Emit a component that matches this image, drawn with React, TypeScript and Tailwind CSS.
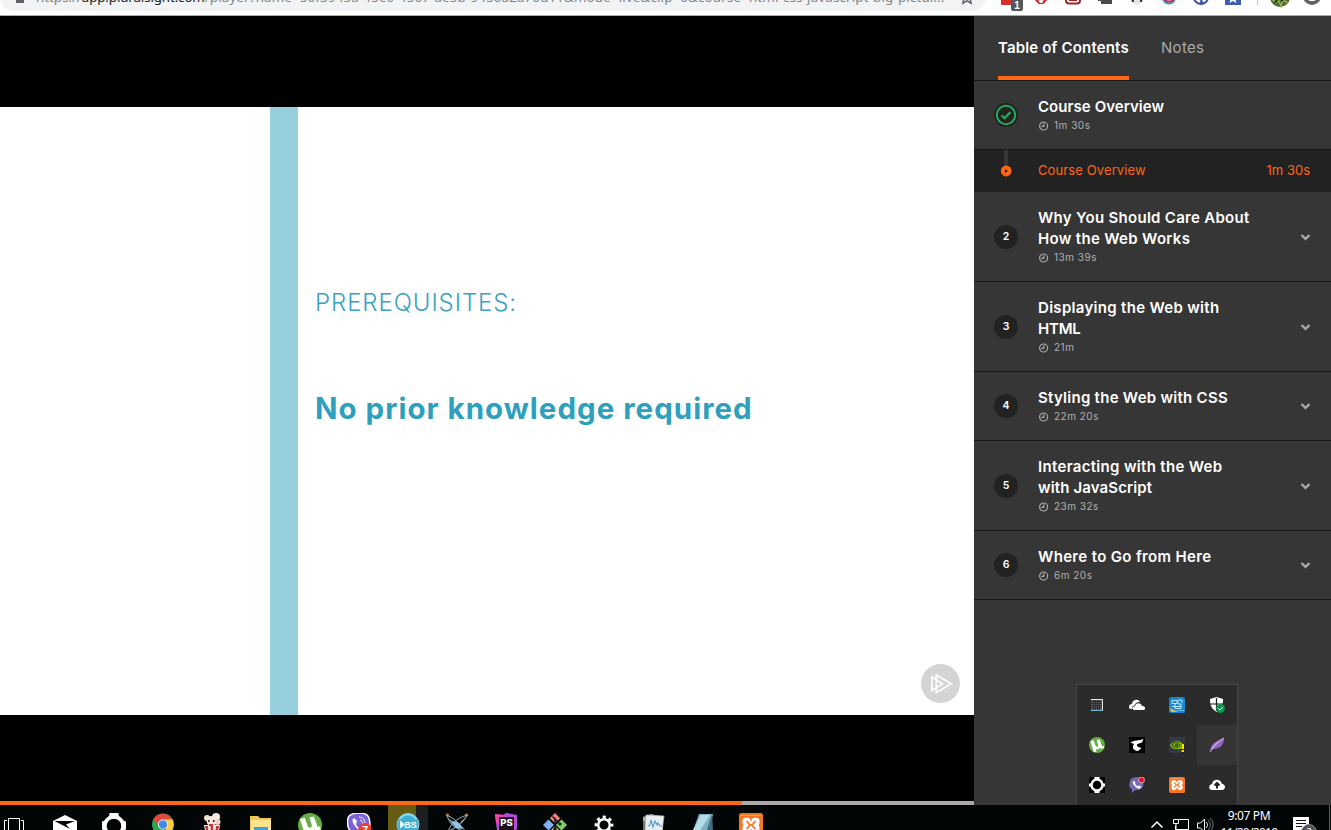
import type { ReactNode } from "react";

/* ---------- Browser toolbar ---------- */

function BrowserBar() {
  return (
    <header className="relative h-4 shrink-0 overflow-hidden border-b border-[#a9acaf] bg-white font-['Noto_Sans',sans-serif]">
      <div className="-mt-[17px] flex h-7 items-center">
        <div className="flex h-7 w-[986px] shrink-0 items-center rounded-full bg-[#f1f3f4] text-[13.300px] leading-7 text-[#80868b]">
          <svg viewBox="0 0 8 12" className="ml-4 h-3 w-2 shrink-0">
            <path d="M0 5h8v7H0z" fill="#5f6368" />
            <path d="M2 5V3a2 2 0 0 1 4 0v2" fill="none" stroke="#5f6368" strokeWidth="1.3" />
          </svg>
          <div className="ml-3 flex w-[910px] whitespace-nowrap">
            <span>https://</span>
            <span className="tracking-[-0.1px] text-[#202124]">app.pluralsight.com</span>
            <span className="tracking-[0.180px]">
              /player?name=56f3945a-45e0-4567-ae5b-9450a2a76d11&amp;mode=live&amp;clip=0&amp;course=html-css-javascript-big-pictur...
            </span>
          </div>
          <svg viewBox="0 0 16 16" className="ml-[13px] h-4 w-4 shrink-0" fill="none" stroke="#5f6368" strokeWidth="1.5">
            <path d="M8 1.7l2 4.3 4.6.5-3.5 3.1 1 4.6L8 11.8l-4.1 2.4 1-4.6L1.400 6.500 6 6z" />
          </svg>
        </div>
        <svg viewBox="986 -17 345 33" className="h-[33px] w-[345px] shrink-0 translate-y-[2px]">
          <rect x="1001" y="-10" width="14" height="15" fill="#d32f2b" />
          <rect x="1011" y="-3" width="12" height="14" rx="2" fill="#55585b" />
          <text x="1017" y="9" fontSize="10" fontFamily="Liberation Sans" fontWeight="700" fill="#fff" textAnchor="middle">1</text>
          <path d="M1034-10h14v9l-4.500 5h-5l-4.500-5z" fill="#e02127" />
          <ellipse cx="1041" cy="-1" rx="2.500" ry="4" fill="#fff" />
          <rect x="1066" y="-10" width="14" height="13.500" rx="3" fill="#fff" stroke="#9f2229" strokeWidth="2" />
          <path d="M1069 0h8" stroke="#9f2229" strokeWidth="2" />
          <path d="M1098-9h8v7h6v6h-11v-3h-3z" fill="#494b4d" />
          <circle cx="1137" cy="-2" r="6.500" fill="#e4e5e5" />
          <path d="M1131-3h3v5h-2zM1140-3h3l-1 5h-2z" fill="#343536" />
          <circle cx="1169" cy="-2.500" r="6" fill="#fff" stroke="#328bdc" strokeWidth="2" />
          <circle cx="1169" cy="-3" r="4.500" fill="none" stroke="#d42e30" strokeWidth="2" />
          <circle cx="1201" cy="-3" r="7" fill="#fff" stroke="#4055a5" strokeWidth="2" />
          <path d="M1195-2h12M1201-10v14M1197-5l6 8M1205-5l-5 8" stroke="#4055a5" strokeWidth="1.500" />
          <rect x="1225" y="-10" width="16" height="15" fill="#3e5eb0" />
          <path d="M1233-7l1.500 4h4l-3 2.500 1 3.500-3.500-2-3.500 2 1-3.500-3-2.500h4z" fill="#fff" />
          <path d="M1257.500-10V5" stroke="#c5c8cb" />
          <circle cx="1280" cy="-3" r="10" fill="#4a682b" />
          <path d="M1272-1l4 4 2-4 3 7 2-6 5 3" fill="none" stroke="#8dac50" strokeWidth="1.800" />
          <path d="M1275 3l4-6 4 4" fill="none" stroke="#263c1e" strokeWidth="2" />
          <circle cx="1312" cy="-4" r="9" fill="#5f6368" />
          <path d="M1309-2h6v3h-6z" fill="#fff" />
        </svg>
      </div>
    </header>
  );
}

/* ---------- Video ---------- */

function Video() {
  return (
    <section className="flex w-[974px] shrink-0 flex-col bg-black">
      <div className="mt-[91px] flex h-[608px] bg-white">
        <div className="ml-[270px] w-7 shrink-0 bg-[#97cfdd]" />
        <div className="ml-[18px] w-[604px] shrink-0 whitespace-nowrap font-['Inter',sans-serif]">
          <p className="mt-[181px] -ml-px text-[24px] font-light leading-[30px] tracking-[0.920px] text-[#3ca2c0]">PREREQUISITES:</p>
          <p className="mt-[70px] -ml-px text-[29.500px] font-bold leading-10 tracking-[1.010px] text-[#2f9fbe]">
            No prior knowledge required
          </p>
        </div>
        <svg viewBox="0 0 39 39" className="mb-3 ml-px h-[39px] w-[39px] shrink-0 self-end">
          <circle cx="19.500" cy="19.500" r="19.500" fill="#d4d3d6" />
          <path d="M11 13v13.500l10.500-6.800zM15.300 11v17.500l15-8.800z" fill="none" stroke="#fff" strokeWidth="1.700" />
        </svg>
      </div>
      <div className="mt-auto flex h-1 bg-[#aaaaaa]">
        <div className="w-[742px] bg-[#ff6615]" />
      </div>
    </section>
  );
}

/* ---------- Sidebar ---------- */

type Line = { text: string; tracking: string };
type Module = { n: number; lines: Line[]; time: string };

const modules: Module[] = [
  {
    n: 2,
    lines: [
      { text: "Why You Should Care About", tracking: "tracking-[0.290px]" },
      { text: "How the Web Works", tracking: "tracking-[0.320px]" },
    ],
    time: "13m 39s",
  },
  {
    n: 3,
    lines: [
      { text: "Displaying the Web with", tracking: "tracking-[0.300px]" },
      { text: "HTML", tracking: "tracking-[-0.200px]" },
    ],
    time: "21m",
  },
  { n: 4, lines: [{ text: "Styling the Web with CSS", tracking: "tracking-[0.270px]" }], time: "22m 20s" },
  {
    n: 5,
    lines: [
      { text: "Interacting with the Web", tracking: "tracking-[0.320px]" },
      { text: "with JavaScript", tracking: "tracking-[0.130px]" },
    ],
    time: "23m 32s",
  },
  { n: 6, lines: [{ text: "Where to Go from Here", tracking: "tracking-[0.340px]" }], time: "6m 20s" },
];

function Duration({ time }: { time: string }) {
  return (
    <div className="flex h-[15px] items-center text-[10px] leading-[15px] tracking-[0.500px] text-[#b0b0b0]">
      <svg viewBox="0 0 10 10" className="mr-[5px] ml-px h-[10px] w-[10px]" fill="none" stroke="#aaaaaa" strokeWidth="1.200">
        <circle cx="4.600" cy="5" r="4" />
        <path d="M4.800 2.300V5.300H2.300" />
      </svg>
      {time}
    </div>
  );
}

function Row({ badge, lines, time, chevron }: { badge: ReactNode; lines: Line[]; time: string; chevron?: boolean }) {
  return (
    <div className="flex items-center border-b border-[#181818] py-4 pl-5 pr-[21px]">
      {badge}
      <div className="ml-5 flex-1 whitespace-nowrap">
        <div className="-mt-px mb-px">
          {lines.map((l) => (
            <div key={l.text} className="text-[15px] font-semibold leading-[21px] text-white">
              <span className={l.tracking}>{l.text}</span>
            </div>
          ))}
        </div>
        <Duration time={time} />
      </div>
      {chevron && (
        <svg viewBox="0 0 10 8" className="h-2 w-[10px]" fill="none" stroke="#aaaaaa" strokeWidth="2.400">
          <path d="M1.500 2L5.500 5.800 9.500 2" />
        </svg>
      )}
    </div>
  );
}

function Sidebar() {
  return (
    <aside className="relative flex-1 bg-[#363636] font-['Inter',sans-serif]">
      <nav className="flex h-[65px] gap-8 border-b border-[#181818] pl-6 text-[15px] leading-[64px]">
        <div className="w-[131px] whitespace-nowrap border-b-4 border-[#ff6615] font-semibold tracking-[0.160px] text-white">
          Table of Contents
        </div>
        <div className="tracking-[0.300px] text-[#aaaaaa]">Notes</div>
      </nav>
      <Row
        badge={
          <svg viewBox="0 0 24 24" className="h-6 w-6 shrink-0" fill="none">
            <circle cx="12" cy="12" r="12" fill="#222" />
            <circle cx="12" cy="12" r="9.200" stroke="#23aa5a" strokeWidth="2" />
            <path d="M7.500 12.200l3 2.900 6-6" stroke="#23aa5a" strokeWidth="2.200" />
          </svg>
        }
        lines={[{ text: "Course Overview", tracking: "tracking-[0.060px]" }]}
        time="1m 30s"
      />
      <div className="flex h-[42px] items-center bg-[#222] pl-[26px] pr-[21px] text-[13px] text-[#ff6615]">
        <svg viewBox="0 0 12 42" className="h-[42px] w-3 shrink-0">
          <path d="M4 0h4v16H4z" fill="#363636" />
          <circle cx="6.200" cy="21" r="5.400" fill="#ff6615" />
          <path d="M5 18.900v4.200l3-2.100z" fill="#222" />
        </svg>
        <span className="ml-[26px] flex-1 tracking-[0.110px]">Course Overview</span>
        <span>1m 30s</span>
      </div>
      {modules.map((m) => (
        <Row
          key={m.n}
          badge={
            <div className="flex h-6 w-6 shrink-0 items-center justify-center rounded-full bg-[#222] text-[10.500px] font-semibold text-white">
              {m.n}
            </div>
          }
          lines={m.lines}
          time={m.time}
          chevron
        />
      ))}
      <Tray />
    </aside>
  );
}

/* ---------- Notification area flyout ---------- */

function Ring() {
  return (
    <g>
      <circle cx="8" cy="8" r="5.500" fill="none" stroke="#fff" strokeWidth="2.500" />
      <path d="M5.500 0h5v3h-5zM5.500 13h5v3h-5zM0 6.500h2.500v3H0zM13.500 6.500H16v3h-2.500z" fill="#fff" />
    </g>
  );
}

function Mu() {
  return (
    <g>
      <circle cx="12" cy="12" r="12" fill="#67ad45" />
      <path d="M2 6l4.800-1.300 3 8.500c.8 2.300 4.600 1.800 4-1L11.500 4.500l4.300-1 3.800 10.300 2.400-.3.800 3-5 1.300-1.300-1.600c-1.400 2.300-4.400 3.200-6.300 1.600l1 4.200-4 .5z" fill="#fff" />
    </g>
  );
}

function Xampp() {
  return (
    <g>
      <rect width="24" height="24" rx="2.500" fill="#f37623" />
      <path d="M2 2.500h20" stroke="#f9a468" />
      <g fill="#fff">
        <rect x="3.500" y="4.800" width="8" height="8" rx="3.200" />
        <rect x="12.500" y="4.800" width="8" height="8" rx="3.200" />
        <rect x="3.500" y="11.500" width="8" height="8" rx="3.200" />
        <rect x="12.500" y="11.500" width="8" height="8" rx="3.200" />
        <path d="M7 8.500h10v7.300H7z" />
      </g>
      <path d="M7.300 8.600c3 0 1.500 3.500 4.700 3.500s1.700-3.500 4.700-3.500M7.300 15.700c3 0 1.500-3.500 4.700-3.500s1.700 3.500 4.700 3.500" fill="none" stroke="#f37623" strokeWidth="1.800" />
    </g>
  );
}

const trayIcons: ReactNode[] = [
  <g>
    <path d="M2 2h12v12H2z" fill="#5b5b5b" />
    <path d="M4.500 2v11M6.500 2v11M8.500 2v11M10.500 2v11M2 4.500h11M2 6.500h11M2 8.500h11M2 10.500h11" stroke="#303030" />
    <path d="M2 2.500h11.500V13" fill="none" stroke="#e8e8e8" />
    <path d="M2 13.500h12" stroke="#80bce0" />
  </g>,
  <g fill="#fff">
    <path d="M0 10c0-2 1-3 3-3 0-4 6-6 8-2-4 0-5 2-5.500 3.500C3.500 8.500 3 10 3.500 12H2c-1.300 0-2-1-2-2z" />
    <path d="M5 13c-2 0-2-4 1-3.700C6.500 5.500 12 5 13 9c4 0 4 4 1 4z" />
  </g>,
  <g>
    <rect width="16" height="16" rx="2" fill="#1588d0" />
    <path d="M3 3.500h5v3H3zM3 9.500h9M6 6.500v5h6V7H9V3h4v3" fill="none" stroke="#bce6fa" />
    <path d="M1 11l8 4H2z" fill="#f1b84a" />
    <path d="M8 13.500h7" stroke="#5bc3ef" />
  </g>,
  <g>
    <path d="M7.500 0l6.500 2c0 6-1 9-6.500 13C2 11 1 8 1 2z" fill="#fff" />
    <path d="M7.500 1v13M1 7h13" stroke="#1c1c1c" strokeWidth="1.200" />
    <circle cx="11.500" cy="11.500" r="4.500" fill="#119450" />
    <path d="M9.500 11.500l1.500 1.500 3-3" stroke="#fff" fill="none" />
  </g>,
  <g transform="scale(.6667)"><Mu /></g>,
  <g>
    <path d="M0 0h16v16H0z" fill="#000" />
    <path d="M1.500 5.500C5 3 10 4 14.500 2L13 5.500 8.500 7c-1.500 1.500 0 3 4 4L9 14C3.500 13.500 3 10 5 7z" fill="#fff" />
  </g>,
  <g>
    <rect width="16" height="16" rx="1" fill="#343945" />
    <path d="M1 8c4-5 9-5 13-1v5H5C3 11 2 10 1 8z" fill="#76b900" />
    <path d="M3 8c3-4 6-3 8 0-2 3-5 3-8 0zm3 0c1-1 2-1 3 0-1 1-2 1-3 0" fill="none" stroke="#283119" />
    <path d="M12 7h4v9h-4z" fill="#242424" />
    <path d="M12.500 7h2.500v5h-2.500zM12.500 13h2.500v2h-2.500z" fill="#ffe100" />
  </g>,
  <g>
    <path d="M1 15c0-8 7-12 14-14 0 7-4 11-11 11z" fill="#9564be" />
    <path d="M1 15C5 9 9 5 15 1 9 5 5 7 3 12" fill="#d6b5e7" stroke="#d6b5e7" strokeWidth=".7" />
  </g>,
  <g><path d="M0 0h16v16H0z" fill="#000" /><Ring /></g>,
  <g>
    <path d="M1 4c1-5 12-5 13 0 1 6 0 9-8 9l-3 3v-4C0 11 0 8 1 4z" fill="#7868b5" />
    <path d="M4.500 4l1.800 1-.2 1.600C7 8.500 8 9 9.200 9.300l1.300-1 1.700 1.500c-1 3-4 2-6.500-.8-2-2.200-2.700-4-1.200-5z" fill="#fff" />
    <circle cx="12.500" cy="3" r="3" fill="#f40c1f" stroke="#ded9ec" strokeWidth=".7" />
  </g>,
  <g transform="scale(.6667)"><Xampp /></g>,
  <g>
    <path d="M3 13C-.5 13-1 8 3 7c1-6 9-5 10 0 4 0 4 6 0 6z" fill="#fff" />
    <path d="M8 11.500v-4M5.500 8.500L8 6l2.500 2.500" fill="none" stroke="#252525" strokeWidth="2" />
  </g>,
];

function Tray() {
  return (
    <div className="absolute bottom-0 left-[102px] grid h-[121px] w-[162px] grid-cols-4 border border-b-0 border-[#454545] bg-[#2b2b2b]">
      {trayIcons.map((icon, i) => (
        <div key={i} className={i === 7 ? "flex h-10 items-center justify-center bg-[#353535]" : "flex h-10 items-center justify-center"}>
          <svg viewBox="0 0 16 16" className="h-4 w-4">{icon}</svg>
        </div>
      ))}
    </div>
  );
}

/* ---------- Taskbar ---------- */

const apps: ReactNode[] = [
  <g>
    <path d="M0 8l12-6 12 6v16H0z" fill="#fff" />
    <path d="M1.500 8h20.500l-9 3.500 4 4.500z" fill="#030505" />
  </g>,
  <g transform="translate(-1) scale(1.08)">
    <circle cx="12" cy="12" r="8.500" fill="none" stroke="#fff" strokeWidth="3.500" />
    <path d="M8 0h8l1 5H7zM0 8l4-1v9l-4-1zM24 8l-4-1v9l4-1z" fill="#fff" />
  </g>,
  <g transform="translate(1)">
    <circle cx="11" cy="11.500" r="11" fill="#2da84f" />
    <path d="M1.500 6A11 11 0 0 1 20.500 6.500H11L6 13z" fill="#e04a3c" />
    <path d="M20.500 6.500A11 11 0 0 1 11 22.500L16 12 13 6.500z" fill="#fdcb42" />
    <circle cx="11" cy="11.500" r="5" fill="#fff" />
    <circle cx="11" cy="11.500" r="4.200" fill="#4587f0" />
  </g>,
  <g>
    <path d="M4 12h16l-2 12H6z" fill="#f4eee7" />
    <path d="M5 13h3l1 11H7zM10.500 13h2.500v11h-2zM16 13h3l-2 11h-2z" fill="#c8333a" />
    <circle cx="7" cy="5" r="3" fill="#f1e3d0" />
    <circle cx="16" cy="4" r="4" fill="#f6ebdd" />
    <circle cx="17.500" cy="9" r="3" fill="#e9d5c1" />
    <circle cx="11.500" cy="8" r="5" fill="#f5e9dd" />
    <path d="M8 7h1.500v2H8zM13 7h1.500v2H13z" fill="#27201b" />
    <path d="M9 11h4v2H9z" fill="#d62e3f" />
  </g>,
  <g>
    <path d="M1 3h8l2 2h11v19H1z" fill="#edc75c" />
    <path d="M2 7h20v17H2z" fill="#fde38c" />
    <path d="M5 14h14v10H5z" fill="#35a5de" />
    <path d="M9 17h6v2H9z" fill="#75c5eb" />
  </g>,
  <Mu />,
  <g>
    <path d="M1 5C3-1 20-2 22 5c2 7 1 16-8 16l-5 3v-4C0 19 0 11 1 5z" fill="#7c61dc" stroke="#fff" strokeWidth="1.500" />
    <path d="M7 5l3 3-1 3c1 3 2 3 4 4l2-1 3 3c-3 3-7 0-10-4-2-3-4-6-1-8z" fill="#fff" />
    <path d="M12 4c4 0 6 3 6 7M13 7c2 0 2 2 3 4" fill="none" stroke="#fff" />
    <circle cx="18" cy="17" r="7" fill="#f4392f" />
    <text x="18" y="21" fontSize="11" fontFamily="Liberation Sans" fontWeight="700" fill="#fff" textAnchor="middle">7</text>
  </g>,
  <g>
    <circle cx="12" cy="11.500" r="11" fill="#3fb2d3" stroke="#8ccbdc" />
    <path d="M4 6c4-6 12-6 16 0" stroke="#82d9ed" strokeWidth="2" fill="none" />
    <path d="M4 7.500l5 4-5 4z" fill="#e8faff" />
    <text x="14.500" y="15" fontSize="9" fontFamily="Liberation Sans" fontWeight="700" fill="#fff" textAnchor="middle">BS</text>
  </g>,
  <g fill="none">
    <path d="M2 2c2 9 11 15 19 17M22 2C19 9 10 16 1 19" stroke="#83929b" strokeWidth="1.300" />
    <path d="M1 2c7 2 14 9 20 17M23 2C16 3 5 10 3 19M5 7l3 2M19 7l-3 2" stroke="#a6b2bb" />
    <path d="M6 8l7 1 5 7-7-1z" fill="#8fc7ee" />
    <circle cx="2.500" cy="2" r="1.500" fill="#d0873a" /><circle cx="21.500" cy="2" r="1.500" fill="#d0873a" />
  </g>,
  <g>
    <path d="M1 1l8 1 3-2 11 2v13l-3 9H4L2 10z" fill="#b84bdc" />
    <path d="M1 1l9 1-4 8H2z" fill="#f144a8" />
    <path d="M5 4h15v16H5z" fill="#1b111d" />
    <text x="12.500" y="13" fontSize="9.500" fontFamily="Inter" fontWeight="800" fill="#fff" textAnchor="middle">PS</text>
  </g>,
  <g>
    <path d="M12 0l5.200 5.200-5.200 5-5.200-5z" fill="#f07a75" />
    <path d="M5.500 6.500l5.500 5.500-5.500 5.500L0 12z" fill="#7eb0f5" />
    <path d="M18.500 6.500L24 12l-5.500 5.500L13 12z" fill="#7ed060" />
    <path d="M12 13l5 5-5 5-5-5z" fill="#ead56a" />
    <path d="M9.500 3.500l6.500 6.500M12 6v12" stroke="#15191a" strokeWidth="1.500" />
    <circle cx="17" cy="11" r="1.600" fill="#15191a" />
    <circle cx="12" cy="16" r="1.800" fill="#15191a" />
  </g>,
  <g fill="none" stroke="#fff">
    <circle cx="12" cy="12" r="5.800" strokeWidth="2.500" />
    <circle cx="12" cy="12" r="8" strokeWidth="2.800" strokeDasharray="3.142 3.142" strokeDashoffset="1.571" />
  </g>,
  <g>
    <path d="M2 4l8-3 12 3v20H2z" fill="#a9aaa5" />
    <path d="M5 2l18 1-2 16-17-1z" fill="#e9edef" stroke="#abb0b2" strokeWidth=".7" />
    <path d="M7 13l2-1 1-5 2 7 2-6 2 4 1-2 2 3h2" fill="none" stroke="#5b9ecb" strokeWidth="1.200" />
    <path d="M2 8h2v14H2z" fill="#707968" />
  </g>,
  <g>
    <path d="M9 1h14l-4 22H1z" fill="#79b3c5" />
    <path d="M11 2h9L9 19H2z" fill="#b7dce5" />
    <path d="M22 1l1 16-8 6z" fill="#456c7d" />
  </g>,
  <Xampp />,
];

function Taskbar() {
  return (
    <footer className="flex h-[25px] shrink-0 items-start overflow-hidden bg-[#030607] font-['Noto_Sans',sans-serif] text-white">
      <svg viewBox="0 0 40 25" className="h-[25px] w-10 shrink-0" fill="none" stroke="#fff">
        <path d="M8.500 13.500h11v14h-11zM7 15.500H4.500V27M21 15.500h2.500V27" />
      </svg>
      {apps.map((icon, i) => (
        <div key={i} className="flex h-[25px] w-[49px] shrink-0 justify-center">
          <div className={i === 7 ? "flex h-[25px] w-10 justify-center bg-[linear-gradient(90deg,#665c13_70%,#1c1f22_70%)] pt-2" : "pt-2"}>
            <svg viewBox="0 0 24 24" className="h-6 w-6">{icon}</svg>
          </div>
        </div>
      ))}
      <svg viewBox="1148 0 70 25" className="ml-auto h-[25px] w-[70px] shrink-0" fill="none" stroke="#fff">
        <path d="M1151.500 22.500l5.500-5.500 5.500 5.500" strokeWidth="1.500" />
        <path d="M1179 14.500h9.500v10h-13v-4M1173.500 14.500h5v4h-5zM1176 19v6" />
        <path d="M1197.500 18v5h3l4 4v-13l-4 4z" />
        <path d="M1206 17c2 2 2 4 0 6" />
        <path d="M1208 15c3 3 3 7 0 10M1210 13c4 4 4 9 0 14" stroke="#777" />
      </svg>
      <div className="w-[62px] shrink-0 whitespace-nowrap pt-[2px] text-center text-[12px] leading-[17px] tracking-[-0.350px]">
        <div>9:07 PM</div>
        <div className="tracking-[-0.700px]">11/20/2019</div>
      </div>
      <svg viewBox="1280 0 51 25" className="h-[25px] w-[51px] shrink-0">
        <path d="M1293 12h16v14h-16z" fill="#fff" />
        <path d="M1296 15.500h10M1296 18.500h10M1296 21.500h6" stroke="#10151a" />
        <circle cx="1309" cy="27" r="7.500" fill="#535657" stroke="#858788" />
        <text x="1309" y="31" fontSize="10" fontFamily="Noto Sans" fill="#fff" textAnchor="middle">2</text>
        <path d="M1329.500 0v25" stroke="#555b5e" />
      </svg>
    </footer>
  );
}

export default function App() {
  return (
    <div className="flex h-[830px] w-[1331px] flex-col overflow-hidden bg-black">
      <BrowserBar />
      <main className="flex h-[789px] shrink-0">
        <Video />
        <Sidebar />
      </main>
      <Taskbar />
    </div>
  );
}
